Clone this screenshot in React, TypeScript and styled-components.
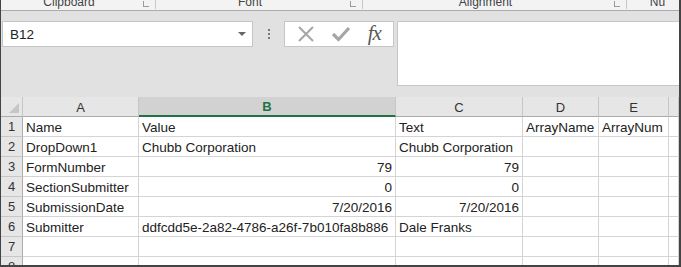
// Library Imports
import * as React from 'react';
import styled, { createGlobalStyle } from 'styled-components';

// Styling
const GlobalStyle = createGlobalStyle`
	html, body {
		margin: 0;
		padding: 0;
		background: #ffffff;
	}
	* {
		box-sizing: border-box;
	}
`

const Window = styled.div`
	width: 681px;
	height: 267px;
	display: flex;
	flex-direction: column;
	background: #e1e1e1;
	border-left: 1px solid #444444;
	border-right: 2px solid #444444;
	border-bottom: 2px solid #444444;
	overflow: hidden;
	font-family: "Liberation Sans", Arial, sans-serif;
	font-size: 13.5px;
	color: #222222;
`

const Ribbon = styled.div`
	height: 11px;
	flex: none;
	display: flex;
	background: #f3f3f3;
	border-bottom: 1px solid #ababab;
	overflow: hidden;
`

const Group = styled.div<{ $width: number }>`
	position: relative;
	width: ${p => p.$width}px;
	flex: none;
	border-right: 1px solid #c8c8c8;
	height: 9px;
	padding-right: 18px;
	text-align: center;
`

const GroupLabel = styled.span`
	display: block;
	margin-top: -4px;
	font-size: 12px;
	line-height: 12px;
	color: #444444;
`

const Launcher = styled.span`
	position: absolute;
	right: 6px;
	top: 1px;
	width: 6px;
	height: 6px;
	border-left: 1px solid #9a9a9a;
	border-bottom: 1px solid #9a9a9a;
`

const FormulaArea = styled.div`
	flex: none;
	display: flex;
	align-items: flex-start;
	padding: 10px 0 0 1px;
	height: 75px;
`

const NameBox = styled.div`
	width: 251px;
	height: 26px;
	background: #ffffff;
	border: 1px solid #c6c6c6;
	display: flex;
	align-items: center;
	justify-content: space-between;
	padding: 0 6px 0 7px;
`

const Caret = styled.span`
	width: 0;
	height: 0;
	border-left: 4px solid transparent;
	border-right: 4px solid transparent;
	border-top: 4px solid #666666;
`

const Dots = styled.div`
	width: 31px;
	height: 26px;
	display: flex;
	flex-direction: column;
	align-items: center;
	justify-content: center;
	gap: 2px;
`

const Dot = styled.span`
	width: 2px;
	height: 2px;
	background: #777777;
`

const ButtonsBox = styled.div`
	width: 110px;
	height: 26px;
	border: 1px solid #c6c6c6;
	background: #ffffff;
	display: flex;
	align-items: center;
	justify-content: space-around;
	padding: 0 4px;
`

const FxLabel = styled.span`
	font-family: "Liberation Serif", "Times New Roman", serif;
	font-style: italic;
	font-size: 21px;
	color: #595959;
	letter-spacing: -1px;
	margin-top: -2px;
`

const FormulaBar = styled.div`
	margin-left: 3px;
	flex: 1;
	height: 65px;
	background: #ffffff;
	border: 1px solid #c6c6c6;
	border-right: none;
`

const Sheet = styled.div`
	margin-top: 11px;
	flex: 1;
	display: grid;
	grid-template-columns: 22px 116px 257px 127px 76px 70px 1fr;
	grid-auto-rows: 20px;
	background: #ffffff;
	overflow: hidden;
`

const Corner = styled.div`
	background: #e6e6e6;
	border-right: 1px solid #c6c6c6;
	border-bottom: 1px solid #ababab;
	position: relative;
	&::after {
		content: "";
		position: absolute;
		right: 3px;
		bottom: 3px;
		border-left: 10px solid transparent;
		border-bottom: 10px solid #c6c6c6;
	}
`

const ColHeader = styled.div<{ $active?: boolean }>`
	background: ${p => p.$active ? '#d2d2d2' : '#e6e6e6'};
	border-right: 1px solid #c6c6c6;
	border-bottom: ${p => p.$active ? '2px solid #217346' : '1px solid #ababab'};
	display: flex;
	align-items: center;
	justify-content: center;
	font-size: 13px;
	font-weight: ${p => p.$active ? 700 : 400};
	color: ${p => p.$active ? '#217346' : '#333333'};
	padding-top: 1px;
`

const RowHeader = styled.div`
	background: #e6e6e6;
	border-right: 1px solid #ababab;
	border-bottom: 1px solid #c6c6c6;
	display: flex;
	align-items: center;
	justify-content: center;
	font-size: 13px;
	color: #333333;
`

const Cell = styled.div<{ $num?: boolean }>`
	border-right: 1px solid #d4d4d4;
	border-bottom: 1px solid #d4d4d4;
	padding: 1px 3px 0 3px;
	display: flex;
	align-items: center;
	justify-content: ${p => p.$num ? 'flex-end' : 'flex-start'};
	white-space: nowrap;
	overflow: visible;
	color: #222222;
`

// Data
const groups = [
	{ label: 'Clipboard', width: 155 },
	{ label: 'Font', width: 207 },
	{ label: 'Alignment', width: 264 },
	{ label: 'Nu', width: 80 },
]

const columns = ['A', 'B', 'C', 'D', 'E', '']

type Value = { text: string, num?: boolean }

const rows: Value[][] = [
	[{ text: 'Name' }, { text: 'Value' }, { text: 'Text' }, { text: 'ArrayName' }, { text: 'ArrayNum' }, { text: '' }],
	[{ text: 'DropDown1' }, { text: 'Chubb Corporation' }, { text: 'Chubb Corporation' }, { text: '' }, { text: '' }, { text: '' }],
	[{ text: 'FormNumber' }, { text: '79', num: true }, { text: '79', num: true }, { text: '' }, { text: '' }, { text: '' }],
	[{ text: 'SectionSubmitter' }, { text: '0', num: true }, { text: '0', num: true }, { text: '' }, { text: '' }, { text: '' }],
	[{ text: 'SubmissionDate' }, { text: '7/20/2016', num: true }, { text: '7/20/2016', num: true }, { text: '' }, { text: '' }, { text: '' }],
	[{ text: 'Submitter' }, { text: 'ddfcdd5e-2a82-4786-a26f-7b010fa8b886' }, { text: 'Dale Franks' }, { text: '' }, { text: '' }, { text: '' }],
	[{ text: '' }, { text: '' }, { text: '' }, { text: '' }, { text: '' }, { text: '' }],
	[{ text: '' }, { text: '' }, { text: '' }, { text: '' }, { text: '' }, { text: '' }],
]

// Render
const App = () => {
	return (
		<>
			<GlobalStyle />
			<Window>
				<Ribbon>
					{groups.map(g => (
						<Group key={g.label} $width={g.width}>
							<GroupLabel>{g.label}</GroupLabel>
							{g.label !== 'Nu' && <Launcher />}
						</Group>
					))}
				</Ribbon>
				<FormulaArea>
					<NameBox>
						<span>B12</span>
						<Caret />
					</NameBox>
					<Dots>
						<Dot />
						<Dot />
						<Dot />
					</Dots>
					<ButtonsBox>
						<svg width="18" height="18" viewBox="0 0 18 18">
							<path d="M2 2 L16 16 M16 2 L2 16" stroke="#a6a6a6" strokeWidth="2" fill="none" />
						</svg>
						<svg width="20" height="18" viewBox="0 0 20 18">
							<path d="M2 9 L7.5 14.5 L18 3" stroke="#a6a6a6" strokeWidth="3.2" fill="none" />
						</svg>
						<FxLabel>fx</FxLabel>
					</ButtonsBox>
					<FormulaBar />
				</FormulaArea>
				<Sheet>
					<Corner />
					{columns.map((c, i) => (
						<ColHeader key={`col-${i}`} $active={c === 'B'}>{c}</ColHeader>
					))}
					{rows.map((row, r) => (
						<React.Fragment key={`row-${r}`}>
							<RowHeader>{r + 1}</RowHeader>
							{row.map((v, c) => (
								<Cell key={`cell-${r}-${c}`} $num={v.num}>{v.text}</Cell>
							))}
						</React.Fragment>
					))}
				</Sheet>
			</Window>
		</>
	)
}

export default App;
